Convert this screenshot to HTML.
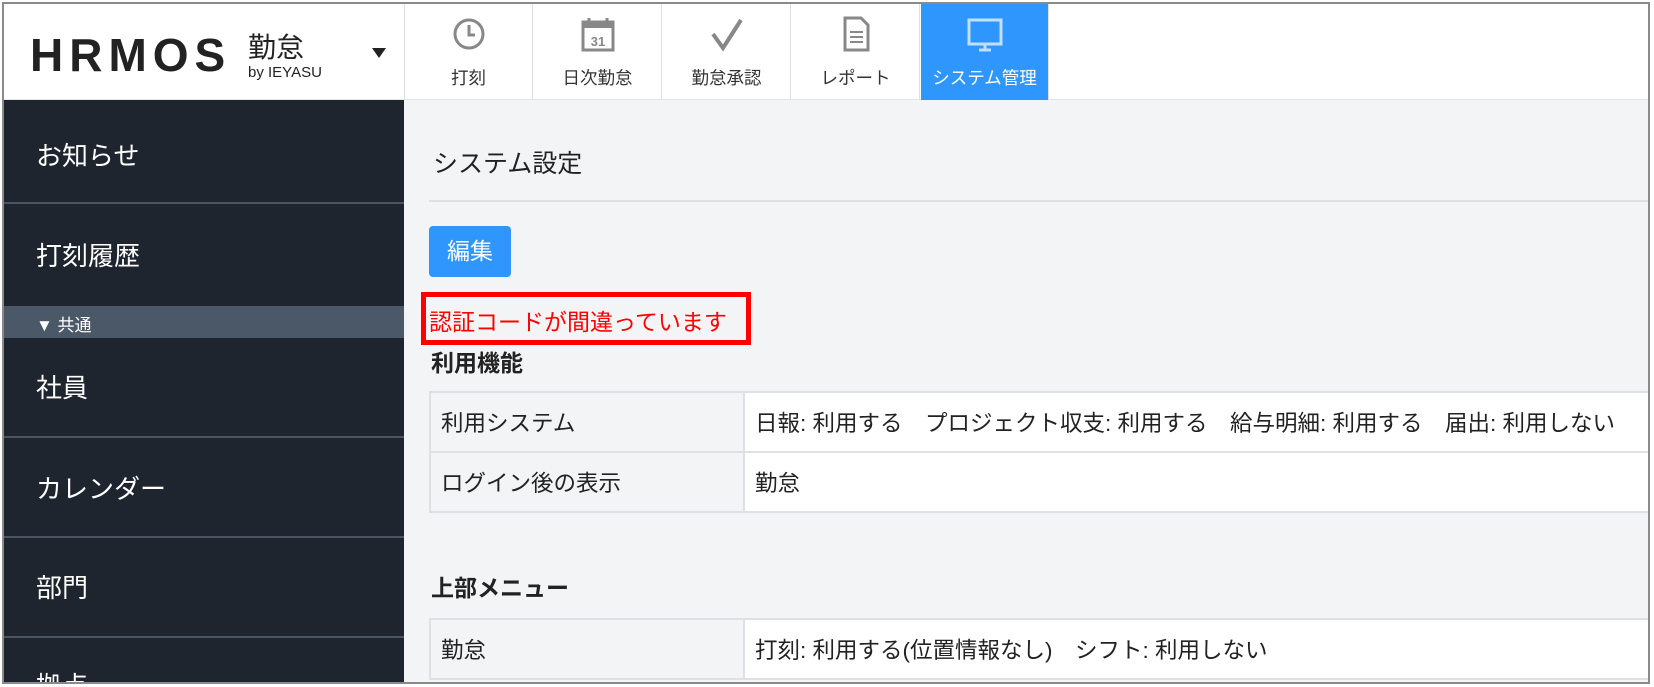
<!DOCTYPE html>
<html><head><meta charset="utf-8"><style>
*{box-sizing:border-box;margin:0;padding:0}
html,body{width:1654px;height:687px;overflow:hidden}
body{background:#fff;font-family:"Liberation Sans","Noto Sans CJK JP",sans-serif;position:relative}
#frame{position:absolute;left:2px;top:2px;width:1648px;height:682px;border:2px solid #8a8a8a;overflow:hidden;background:#f3f4f6}
.hdr{position:absolute;left:0;top:0;width:100%;height:96px;background:#fff;border-bottom:1px solid #e2e5ea}
.logo{position:absolute;left:26px;top:24px;font-size:46px;font-weight:bold;letter-spacing:6px;color:#222}
.kin{position:absolute;left:244px;top:22px;font-size:28px;color:#222}
.by{position:absolute;left:244px;top:60px;font-size:15px;color:#222}
.caret{position:absolute;left:368px;top:44px;width:0;height:0;border-left:7px solid transparent;border-right:7px solid transparent;border-top:10px solid #222}
.ldiv{position:absolute;left:400px;top:0;width:1px;height:96px;background:#dde1e6}
.tab{position:absolute;top:0;width:128px;height:96px;border-right:1px solid #dde1e6;text-align:center;font-size:17.5px;color:#333}
.tab span{position:absolute;left:0;right:0;top:61px}
.tab svg{position:absolute;left:46px;top:10px}
.tab.act{background:#2e96fc;color:#fff}
.side{position:absolute;left:0;top:96px;width:400px;height:582px;background:#1f252e;overflow:hidden}
.si{position:absolute;left:32px;font-size:26px;color:#fff}
.sd{position:absolute;left:0;width:400px;height:2px;background:#4a5563}
.band{position:absolute;left:0;top:206px;width:400px;height:32px;background:#4a5868;color:#fff;font-size:17px;padding:5px 0 0 32px}
.main{position:absolute;left:425px;top:96px;right:0;height:582px}
h2{position:absolute;font-size:25px;font-weight:normal;color:#222}
.hr{position:absolute;left:0;right:0;top:100px;height:2px;background:#dde1e6}
.btn{position:absolute;left:0;top:126px;width:82px;height:51px;background:#2e96fc;border-radius:4px;color:#fff;font-size:23px;text-align:center;line-height:51px}
.err{position:absolute;left:-8px;top:192px;width:330px;height:53px;border:5px solid #f00;color:#f00;font-size:23px;padding:6px 0 0 3px;white-space:nowrap}
h3{position:absolute;font-size:23px;font-weight:bold;color:#222}
table{position:absolute;left:0;border-collapse:collapse;font-size:22.5px;color:#222;width:calc(100% + 4px)}
td{border:2px solid #dde1e6;padding:0 10px;height:60px;white-space:nowrap}
td.k{background:#f3f4f6;width:314px}
td.v{background:#fff}
</style></head><body><div id="frame">
<div class="hdr">
<div class="logo">HRMOS</div><div class="kin">勤怠</div><div class="by">by IEYASU</div><div class="caret"></div>
<div class="ldiv"></div>
<div class="tab" style="left:401px"><svg width="36" height="40" viewBox="0 0 36 40"><circle cx="18" cy="20" r="14" fill="none" stroke="#888" stroke-width="3"/><path d="M18 11v10h6" fill="none" stroke="#888" stroke-width="3"/></svg><span>打刻</span></div>
<div class="tab" style="left:530px"><svg width="36" height="40" viewBox="0 0 36 40"><rect x="3" y="8" width="30" height="28" fill="none" stroke="#888" stroke-width="3"/><rect x="3" y="8" width="30" height="6" fill="#888"/><path d="M9 4v8M27 4v8" stroke="#888" stroke-width="3"/><text x="18" y="32" font-size="13" text-anchor="middle" fill="#888" font-family="Liberation Sans" font-weight="bold">31</text></svg><span>日次勤怠</span></div>
<div class="tab" style="left:659px"><svg width="36" height="40" viewBox="0 0 36 40"><path d="M4 20l10 14L32 6" fill="none" stroke="#888" stroke-width="4"/></svg><span>勤怠承認</span></div>
<div class="tab" style="left:788px"><svg width="36" height="40" viewBox="0 0 36 40"><path d="M7 4h16l7 7v25H7z" fill="none" stroke="#888" stroke-width="3"/><path d="M12 18h13M12 23h13M12 28h13" stroke="#888" stroke-width="2"/></svg><span>レポート</span></div>
<div class="tab act" style="left:917px"><svg width="36" height="40" viewBox="0 0 36 40"><rect x="2" y="6" width="32" height="24" fill="none" stroke="#bfe0ff" stroke-width="3"/><path d="M12 36h12M18 30v6" stroke="#bfe0ff" stroke-width="3"/></svg><span>システム管理</span></div>
</div>
<div class="side">
<div class="si" style="top:36px">お知らせ</div><div class="sd" style="top:102px"></div>
<div class="si" style="top:136px">打刻履歴</div>
<div class="band">▼ 共通</div>
<div class="si" style="top:268px">社員</div><div class="sd" style="top:336px"></div>
<div class="si" style="top:369px">カレンダー</div><div class="sd" style="top:436px"></div>
<div class="si" style="top:468px">部門</div><div class="sd" style="top:536px"></div>
<div class="si" style="top:566px">拠点</div>
</div>
<div class="main">
<h2 style="left:4px;top:44px">システム設定</h2>
<div class="hr"></div>
<div class="btn">編集</div>
<div class="err">認証コードが間違っています</div>
<h3 style="left:2px;top:244px">利用機能</h3>
<table style="top:291px"><tr><td class="k">利用システム</td><td class="v">日報: 利用する　プロジェクト収支: 利用する　給与明細: 利用する　届出: 利用しない</td></tr><tr><td class="k">ログイン後の表示</td><td class="v">勤怠</td></tr></table>
<h3 style="left:2px;top:469px">上部メニュー</h3>
<table style="top:518px"><tr><td class="k">勤怠</td><td class="v">打刻: 利用する(位置情報なし)　シフト: 利用しない</td></tr></table>
</div>
</div></body></html>
